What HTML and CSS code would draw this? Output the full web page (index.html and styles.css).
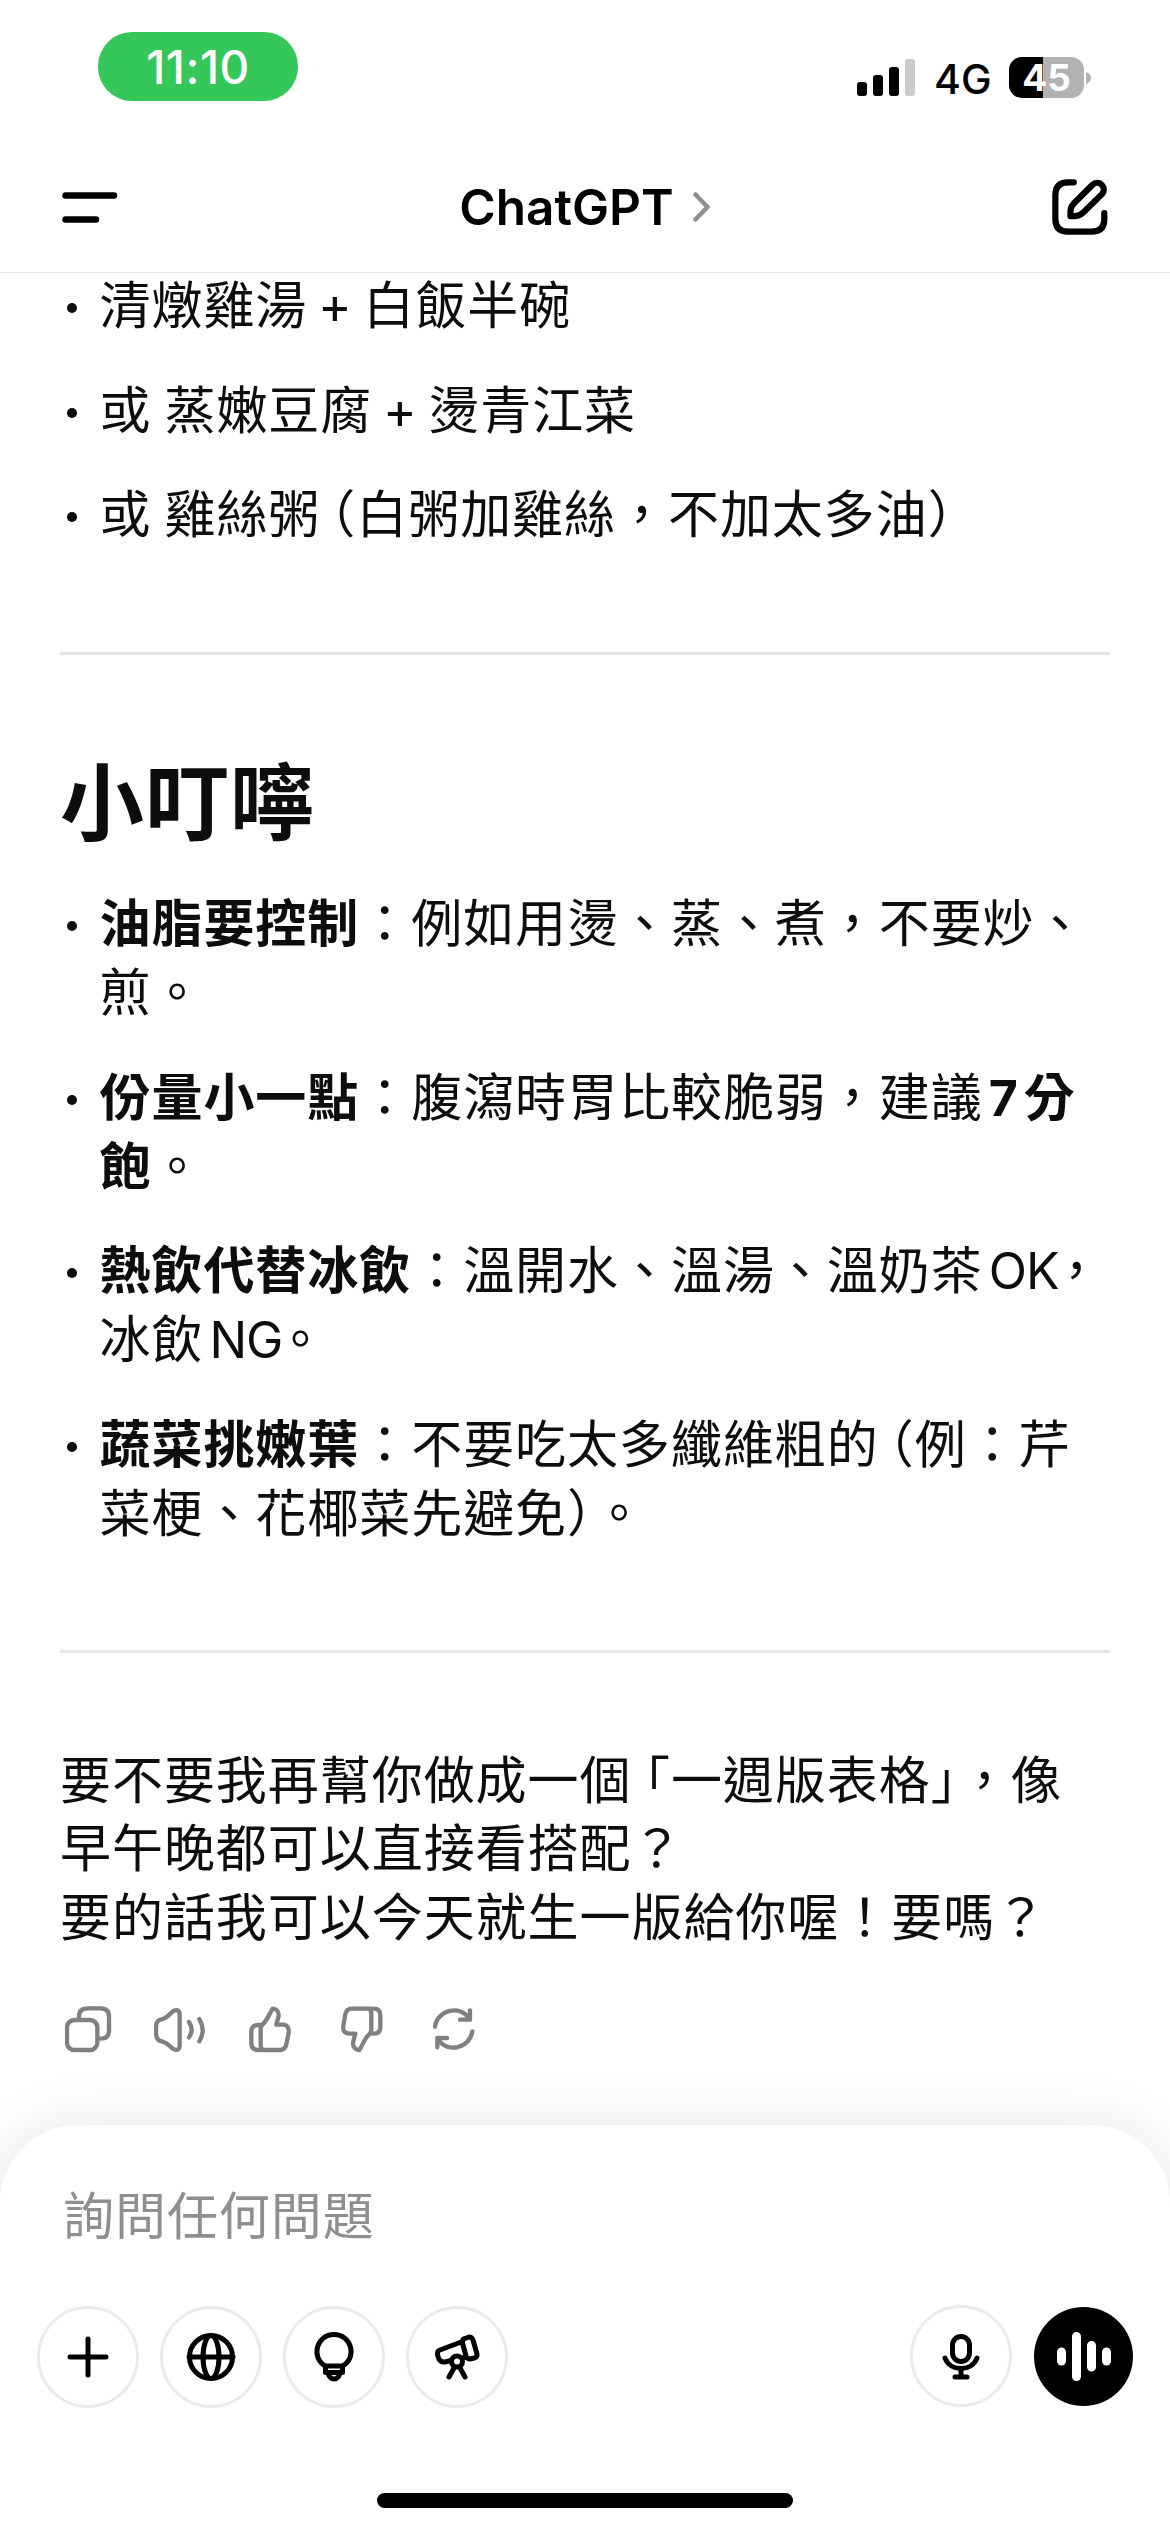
FILE: index.html
```html
<!DOCTYPE html>
<html lang="zh-Hant">
<head>
<meta charset="utf-8">
<title>ChatGPT</title>
<link rel="stylesheet" href="styles.css">
</head>
<body>
<div class="screen">
  <div class="status">
    <div class="time">11:10</div>
    <div class="status-right">
      <svg class="signal" viewBox="0 0 58 37"><rect y="23" width="10" height="14" rx="3"/><rect x="16" y="16" width="10" height="21" rx="3"/><rect x="32" y="8" width="10" height="29" rx="3"/><rect x="48" width="10" height="37" rx="3" fill="#cbcbcb"/></svg>
      <span class="network">4G</span>
      <div class="battery"><span>45</span></div>
      <svg class="nub" viewBox="0 0 5 12"><path d="M0 0Q5 2 5 6T0 12Z" fill="#b2b2b2"/></svg>
    </div>
  </div>
  <header class="header">
    <svg class="menu" viewBox="0 0 56 31"><path d="M3.500 3.500h48.500M3.500 27.500h30.500"/></svg>
    <div class="title">ChatGPT<svg class="chevron" viewBox="0 0 18 32"><path d="M2.500 3.500L14.500 16L2.500 28.500"/></svg></div>
    <svg class="compose" viewBox="696 479 167 167"><path d="M761 489H744Q706 489 706 527V598Q706 636 744 636H814Q852 636 852 598V581"/><path d="M751 590C750 568 752 561 763 550L817 496C836 479 862 505 845 524L790 578C780 588 772 590 751 590Z"/></svg>
  </header>
  <main class="content">
    <ul class="list first">
      <li>清燉雞湯<span class="plus">+</span>白飯半碗</li>
      <li>或<span class="gap"></span>蒸嫩豆腐<span class="plus">+</span>燙青江菜</li>
      <li>或<span class="gap"></span>雞絲粥<span class="half open">（</span>白粥加雞絲，不加太多油<span class="half">）</span></li>
    </ul>
    <hr>
    <h2>小叮嚀</h2>
    <ul class="list">
      <li><b>油脂要控制</b>：例如用燙、蒸、煮，不要炒、<br>煎。</li>
      <li><b>份量小一點</b>：腹瀉時胃比較脆弱，建議<b class="latin seven">7</b><b>分<br>飽</b>。</li>
      <li><b>熱飲代替冰飲</b>：溫開水、溫湯、溫奶茶<span class="latin">OK</span><span class="half tight">，</span><br>冰飲<span class="latin">NG</span><span class="half tight">。</span></li>
      <li><b>蔬菜挑嫩葉</b>：不要吃太多纖維粗的<span class="half open">（</span>例：芹<br>菜梗、花椰菜先避免<span class="half">）</span>。</li>
    </ul>
    <hr class="second">
    <p>要不要我再幫你做成一個<span class="half quote-open">「</span>一週版表格<span class="half quote-close">」</span>，像<br>早午晚都可以直接看搭配？<br>要的話我可以今天就生一版給你喔！要嗎？</p>
    <div class="actions">
      <svg viewBox="75 80 140 140"><rect x="81" y="122" width="91" height="90" rx="22"/><path d="M117 118V112Q117 87 142 87H182Q207 87 207 112V153Q207 178 182 178"/></svg>
      <svg class="wide" viewBox="342 80 155 140"><path d="M348 145C348 120 361 121 371 118C385 114 391 99 402 94C412 90 419 94 419 105V199C419 210 412 214 402 210C391 205 385 192 371 188C361 185 348 185 348 160Z"/><path d="M447 128Q463 151 447 174M478 119Q498 152 478 186"/></svg>
      <svg class="up" viewBox="629 80 126 140"><path d="M663 137H656Q636 137 636 157V192Q636 212 656 212H722C733 212 738 207 741 196L748 160C750 145 743 136 730 136H711C714 120 719 114 718 104C717 92 706 88 700 88C693 96 686 121 671 134Q664 140 664 150V197Q664 209 672 212"/></svg>
      <svg class="down" viewBox="906 80 126 140"><path d="M998 163H1004Q1024 163 1024 143V108Q1024 88 1004 88H938C927 88 922 93 919 104L913 140C911 155 918 163 931 163H949C946 179 941 185 942 195C943 207 955 212 961 212C968 204 975 179 990 166Q997 160 997 150V103Q997 91 989 88"/></svg>
      <svg class="retry" viewBox="1182 80 126 140"><path d="M1188 142C1195 92 1264 73 1292 120M1293 93V121H1263M1300 156C1293 206 1224 225 1196 178M1195 204V176H1224"/></svg>
    </div>
  </main>
  <footer class="composer">
    <div class="placeholder">詢問任何問題</div>
    <div class="tools">
      <button class="tool"><svg viewBox="-51 -51 102 102"><path d="M-18 0H18M0-18V18"/></svg></button>
      <button class="tool"><svg viewBox="-51 -51 102 102"><circle r="21.500"/><ellipse rx="8" ry="21.500"/><path d="M-22 0H22"/></svg></button>
      <button class="tool"><svg viewBox="-51 -51 102 102"><path d="M-8.500 9C-24 0-17-22.500 0-22.500S24 0 8.500 9ZM-8.500 9V15.500H8.500V9M-6 16Q-4.500 22 0 22T6 16"/></svg></button>
      <button class="tool"><svg viewBox="-51 -51 102 102"><path d="M-6 3.500L-12 5Q-17 5.500-18.500 1L-19.500-2.500Q-20-6-17-7L5.500-15.500M5.500-14Q5-18 8-18.500L12-20Q15-20 16-17L20-3Q20.500 0 17.500 1L13 2Q10 2 9-1ZM9-0.500L6 1"/><circle cy="4.500" r="5.500"/><path d="M-3 11L-8 20M3 11L8 20"/></svg></button>
      <button class="tool mic"><svg viewBox="-51 -51 102 102"><rect x="-8.500" y="-19.500" width="17" height="25" rx="8.500"/><path d="M-16 2C-11 16 11 16 16 2M0 13V21M-6 21H6"/></svg></button>
      <button class="tool voice"><svg viewBox="-49.500 -49.500 99 99"><path d="M-22-4.500V4.500M-7-20V20M8-11V10.500M23-4.500V4.500"/></svg></button>
    </div>
    <div class="home"></div>
  </footer>
</div>
</body>
</html>
```
FILE: styles.css
```css
* { box-sizing: border-box; }

body {
  margin: 0;
  background: #fff;
  color: #0d0d0d;
  font-family: "Noto Sans CJK TC", sans-serif;
}

svg {
  display: block;
  flex: none;
  fill: none;
  stroke: #000;
  stroke-linecap: round;
  stroke-linejoin: round;
}

.screen {
  width: 1170px;
  height: 2532px;
  display: flex;
  flex-direction: column;
  overflow: hidden;
}

.status {
  height: 142px;
  flex: none;
  display: flex;
  justify-content: space-between;
  align-items: flex-start;
  padding: 32px 79px 0 98px;
  font-family: Inter, sans-serif;
  color: #000;
}

.time {
  width: 200px;
  height: 69px;
  border-radius: 34px;
  background: #35c759;
  color: #fff;
  font-size: 46px;
  font-weight: 500;
  letter-spacing: 0.5px;
  line-height: 70px;
  text-align: center;
}

.status-right { display: flex; align-items: center; height: 41px; margin-top: 25px; }
.signal { width: 58px; height: 37px; fill: #000; stroke: none; }
.network { width: 59px; margin: 4px 16px 0 19px; font-size: 41px; font-weight: 500; line-height: 41px; }
.battery {
  width: 75px;
  height: 41px;
  border-radius: 13px;
  background: linear-gradient(90deg, #000 34px, #b2b2b2 34px);
  color: #fff;
  font-size: 37px;
  font-weight: 700;
  line-height: 41px;
  text-align: center;
}
.nub { width: 5px; height: 12px; margin-left: 2px; stroke: none; }

.header {
  height: 131px;
  flex: none;
  display: flex;
  justify-content: space-between;
  align-items: center;
  padding: 0 62px;
  border-bottom: 1px solid #e3e3e3;
}
.menu { width: 56px; height: 31px; stroke-width: 6.5; }
.title {
  display: flex;
  align-items: center;
  color: #000;
  font: 600 49.500px/60px Inter, sans-serif;
}
.chevron { width: 18px; height: 32px; margin-left: 19px; stroke: #8e8e93; stroke-width: 4.5; }
.compose { width: 56px; height: 56px; stroke-width: 18.5; }

.content {
  flex: none;
  height: 1852px;
  padding: 0 60px;
  font-size: 51px;
  letter-spacing: 0.95px;
  line-height: 69px;
  white-space: nowrap;
  text-spacing-trim: space-all;
}

.list {
  display: flex;
  flex-direction: column;
  gap: 35.500px;
  margin: 0;
  padding: 0 0 0 39.500px;
  list-style: none;
}
.list.first { margin-top: -5px; }
.list li { position: relative; }
.list li::before {
  content: "";
  position: absolute;
  left: -33px;
  top: 35px;
  width: 10px;
  height: 10px;
  border-radius: 50%;
  background: #0d0d0d;
}
b { font-weight: 700; }
.plus { display: inline-block; width: 56px; text-align: center; font-family: Inter, sans-serif; line-height: 60px; }
.gap { display: inline-block; width: 13px; }
.half { font-feature-settings: "halt"; }
.open { margin-left: 9.500px; }
.quote-open { margin-left: 13px; }
.quote-close { margin-right: 1.500px; }
.latin { margin-left: 6px; font-family: Inter, sans-serif; font-size: 50px; letter-spacing: -1px; line-height: 60px; }
.seven { margin-right: 7px; }
.tight { margin-left: 5px; }

hr { height: 3px; margin: 106px 0 93px; border: 0; background: #e6e6e6; }
hr.second { margin: 105px 0 90px; }

h2 {
  margin: 0 0 38px;
  font-size: 84px;
  font-weight: 700;
  letter-spacing: 1px;
  line-height: 100px;
}

p { margin: 0; line-height: 68.500px; }

.actions { display: flex; align-items: center; margin: 58px 0 0 5px; gap: 42px; }
.actions svg { width: 42px; height: 46.700px; stroke: #808080; stroke-width: 13; }
.actions svg:first-child { width: 46.700px; }
.actions .wide { width: 51.700px; }
.actions .up { margin-left: 2px; }
.actions .down, .actions .retry { margin-left: 8px; }

.composer {
  flex: 1;
  position: relative;
  padding: 55px 37px 0;
  border-radius: 78px 78px 0 0;
  background: #fff;
  box-shadow: 0 0 60px rgba(0, 0, 0, 0.1);
}
.placeholder {
  padding-left: 26px;
  color: #8f8f8f;
  font-size: 51px;
  letter-spacing: 0.95px;
  line-height: 66px;
}
.tools { display: flex; align-items: center; gap: 21px; margin-top: 60px; }
.tool {
  width: 102px;
  height: 102px;
  flex: none;
  padding: 0;
  border: 3px solid #ebebeb;
  border-radius: 50%;
  background: #fff;
}
.tool svg { width: 102px; height: 102px; margin: -3px; stroke-width: 5; }
.mic { margin: -2px 0 0 auto; }
.voice { width: 99px; height: 99px; border: 0; background: #000; margin: -2px 0 0 1px; }
.voice svg { width: 99px; height: 99px; margin: 0; stroke: #fff; stroke-width: 9; }
.home { width: 416px; height: 15px; margin: 85px auto 0; border-radius: 8px; background: #000; }
```
